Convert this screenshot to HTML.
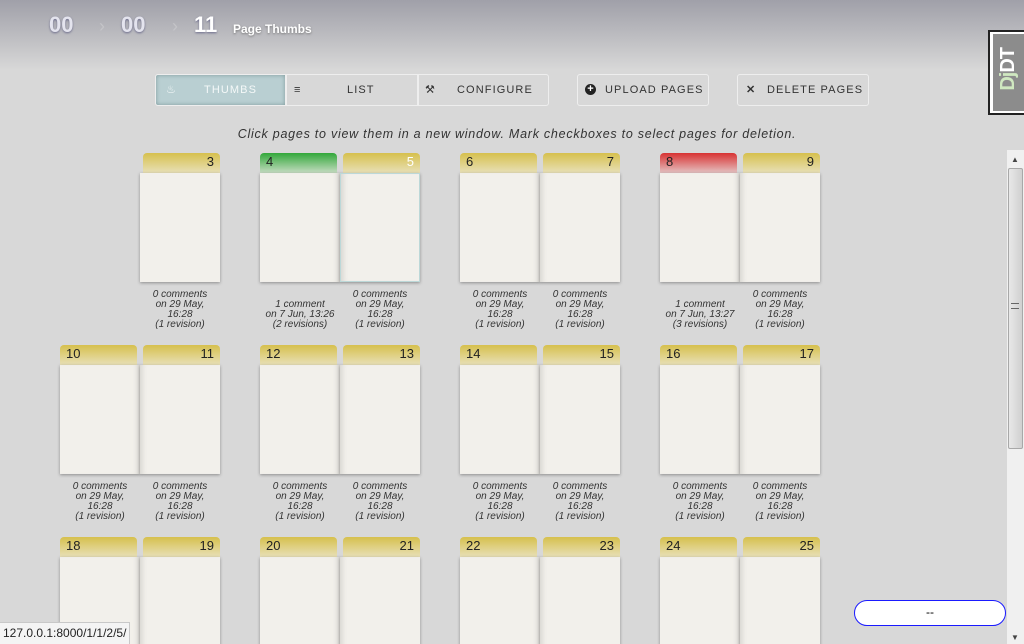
<!DOCTYPE html>
<html><head><meta charset="utf-8"><style>
*{margin:0;padding:0;box-sizing:border-box}
html,body{width:1024px;height:644px;overflow:hidden}
body{background:#d8d8d8;font-family:"Liberation Sans",sans-serif;position:relative}
.hdr{position:absolute;left:0;top:0;width:1024px;height:70px;background:linear-gradient(#a0a0a9,#b6b6bb 40%,#d8d8d8)}
.bc{position:absolute;top:12px;font-weight:bold;font-size:22px;color:#e4e4ee;text-shadow:0 1px 2px #6a6a8a}
.arr{position:absolute;top:16px;width:8px;height:18px;color:#c4c4c8;font-size:18px}
.btn{position:absolute;top:74px;height:32px;border:1px solid #eee;font-size:11px;letter-spacing:1.1px;color:#333;line-height:30px;white-space:nowrap}
.tab{position:absolute;height:20px;border-radius:4px 4px 0 0;background:linear-gradient(#d6c04d,#e8e0b8);font-size:13px;color:#222;line-height:18px;padding:0 6px}
.tab.r{text-align:right}
.tab.g{background:linear-gradient(#32a83a,#c6dcc2)}
.tab.red{background:linear-gradient(#d83232,#e4c2c2)}
.pg{position:absolute;width:80px;height:109px;background:#f2f0eb;box-shadow:0 1px 3px rgba(0,0,0,.35)}
.pg.l{box-shadow:inset -6px 0 6px -4px rgba(0,0,0,.15),0 1px 3px rgba(0,0,0,.35)}
.pg.r{box-shadow:inset 6px 0 6px -4px rgba(0,0,0,.12),0 1px 3px rgba(0,0,0,.35)}
.cm{position:absolute;width:100px;text-align:center;font-style:italic;font-size:10px;line-height:10px;color:#333}
</style></head><body>
<div class="hdr"></div>
<div class="bc" style="left:49px">00</div>
<div class="arr" style="left:99px">›</div>
<div class="bc" style="left:121px">00</div>
<div class="arr" style="left:172px">›</div>
<div class="bc" style="left:194px;color:#fff">11</div>
<div style="position:absolute;left:233px;top:22px;font-size:12px;font-weight:bold;color:#fff;text-shadow:0 1px 2px #777">Page Thumbs</div>

<div class="btn" style="left:155px;width:131px;background:#b9cfd2;color:#f4f8f8;box-shadow:inset 0 0 4px #7f9a9c;border-radius:3px 0 0 3px"><span style="position:absolute;left:10px;font-size:11px">&#9832;</span><span style="position:absolute;left:48px">THUMBS</span></div>
<div class="btn" style="left:286px;width:132px"><span style="position:absolute;left:7px">&#8801;</span><span style="position:absolute;left:60px">LIST</span></div>
<div class="btn" style="left:418px;width:131px;border-radius:0 3px 3px 0"><span style="position:absolute;left:6px">&#9874;</span><span style="position:absolute;left:38px">CONFIGURE</span></div>
<div class="btn" style="left:577px;width:132px;border-radius:3px"><span style="position:absolute;left:7px;top:9px;width:11px;height:11px;border-radius:50%;background:#222;color:#fff;font-size:11px;line-height:11px;text-align:center;letter-spacing:0;font-weight:bold">+</span><span style="position:absolute;left:27px">UPLOAD PAGES</span></div>
<div class="btn" style="left:737px;width:132px;border-radius:3px"><span style="position:absolute;left:8px;font-weight:bold">✕</span><span style="position:absolute;left:29px">DELETE PAGES</span></div>

<div style="position:absolute;left:988px;top:30px;width:36px;height:85px;border:2px solid #222;border-right:none;background:#fff;padding:2px 0 2px 3px"><div style="width:100%;height:100%;background:#8c8c8c;position:relative"><div style="position:absolute;left:3px;top:14px;writing-mode:vertical-rl;transform:rotate(180deg);font-weight:bold;font-size:20px;line-height:24px;color:#fff;letter-spacing:-1px"><span style="color:#cfe8c0">Dj</span>DT</div></div></div>

<div style="position:absolute;left:0;width:1034px;top:127px;text-align:center;font-style:italic;font-size:12.5px;letter-spacing:.75px;color:#333">Click pages to view them in a new window. Mark checkboxes to select pages for deletion.</div>

<!-- row 1 -->
<div class="tab r" style="left:143px;top:153px;width:77px">3</div>
<div class="pg" style="left:140px;top:173px"></div>
<div class="cm" style="left:130px;top:290px">0 comments<br>on 29 May,<br>16:28<br>(1 revision)</div>

<div class="tab g" style="left:260px;top:153px;width:77px">4</div>
<div class="pg l" style="left:260px;top:173px"></div>
<div class="cm" style="left:250px;top:300px">1 comment<br>on 7 Jun, 13:26<br>(2 revisions)</div>
<div class="tab r" style="left:343px;top:153px;width:77px;color:#fff">5</div>
<div class="pg r" style="left:340px;top:173px;border:1px solid #bcd8d8"></div>
<div class="cm" style="left:330px;top:290px">0 comments<br>on 29 May,<br>16:28<br>(1 revision)</div>

<div class="tab" style="left:460px;top:153px;width:77px">6</div>
<div class="pg l" style="left:460px;top:173px"></div>
<div class="cm" style="left:450px;top:290px">0 comments<br>on 29 May,<br>16:28<br>(1 revision)</div>
<div class="tab r" style="left:543px;top:153px;width:77px">7</div>
<div class="pg r" style="left:540px;top:173px"></div>
<div class="cm" style="left:530px;top:290px">0 comments<br>on 29 May,<br>16:28<br>(1 revision)</div>

<div class="tab red" style="left:660px;top:153px;width:77px">8</div>
<div class="pg l" style="left:660px;top:173px"></div>
<div class="cm" style="left:650px;top:300px">1 comment<br>on 7 Jun, 13:27<br>(3 revisions)</div>
<div class="tab r" style="left:743px;top:153px;width:77px">9</div>
<div class="pg r" style="left:740px;top:173px"></div>
<div class="cm" style="left:730px;top:290px">0 comments<br>on 29 May,<br>16:28<br>(1 revision)</div>

<!-- row 2 -->
<div class="tab" style="left:60px;top:345px;width:77px">10</div><div class="pg l" style="left:60px;top:365px"></div>
<div class="cm" style="left:50px;top:482px">0 comments<br>on 29 May,<br>16:28<br>(1 revision)</div>
<div class="tab r" style="left:143px;top:345px;width:77px">11</div><div class="pg r" style="left:140px;top:365px"></div>
<div class="cm" style="left:130px;top:482px">0 comments<br>on 29 May,<br>16:28<br>(1 revision)</div>
<div class="tab" style="left:260px;top:345px;width:77px">12</div><div class="pg l" style="left:260px;top:365px"></div>
<div class="cm" style="left:250px;top:482px">0 comments<br>on 29 May,<br>16:28<br>(1 revision)</div>
<div class="tab r" style="left:343px;top:345px;width:77px">13</div><div class="pg r" style="left:340px;top:365px"></div>
<div class="cm" style="left:330px;top:482px">0 comments<br>on 29 May,<br>16:28<br>(1 revision)</div>
<div class="tab" style="left:460px;top:345px;width:77px">14</div><div class="pg l" style="left:460px;top:365px"></div>
<div class="cm" style="left:450px;top:482px">0 comments<br>on 29 May,<br>16:28<br>(1 revision)</div>
<div class="tab r" style="left:543px;top:345px;width:77px">15</div><div class="pg r" style="left:540px;top:365px"></div>
<div class="cm" style="left:530px;top:482px">0 comments<br>on 29 May,<br>16:28<br>(1 revision)</div>
<div class="tab" style="left:660px;top:345px;width:77px">16</div><div class="pg l" style="left:660px;top:365px"></div>
<div class="cm" style="left:650px;top:482px">0 comments<br>on 29 May,<br>16:28<br>(1 revision)</div>
<div class="tab r" style="left:743px;top:345px;width:77px">17</div><div class="pg r" style="left:740px;top:365px"></div>
<div class="cm" style="left:730px;top:482px">0 comments<br>on 29 May,<br>16:28<br>(1 revision)</div>

<!-- row 3 -->
<div class="tab" style="left:60px;top:537px;width:77px">18</div><div class="pg l" style="left:60px;top:557px"></div>
<div class="tab r" style="left:143px;top:537px;width:77px">19</div><div class="pg r" style="left:140px;top:557px"></div>
<div class="tab" style="left:260px;top:537px;width:77px">20</div><div class="pg l" style="left:260px;top:557px"></div>
<div class="tab r" style="left:343px;top:537px;width:77px">21</div><div class="pg r" style="left:340px;top:557px"></div>
<div class="tab" style="left:460px;top:537px;width:77px">22</div><div class="pg l" style="left:460px;top:557px"></div>
<div class="tab r" style="left:543px;top:537px;width:77px">23</div><div class="pg r" style="left:540px;top:557px"></div>
<div class="tab" style="left:660px;top:537px;width:77px">24</div><div class="pg l" style="left:660px;top:557px"></div>
<div class="tab r" style="left:743px;top:537px;width:77px">25</div><div class="pg r" style="left:740px;top:557px"></div>

<!-- scrollbar -->
<div style="position:absolute;left:1007px;top:150px;width:17px;height:494px;background:#f0f0f0"></div>
<div style="position:absolute;left:1011px;top:155px;font-size:8px;color:#444">▲</div>
<div style="position:absolute;left:1008px;top:168px;width:15px;height:281px;background:linear-gradient(90deg,#e8e8e8,#d0d0d0);border:1px solid #a8a8a8;border-radius:2px"></div>
<div style="position:absolute;left:1011px;top:303px;width:8px;height:6px;border-top:1px solid #666;border-bottom:1px solid #666"></div>
<div style="position:absolute;left:1011px;top:633px;font-size:8px;color:#444">▼</div>

<div style="position:absolute;left:854px;top:600px;width:152px;height:26px;border:1.5px solid #1a1aff;border-radius:13px;background:#fff;text-align:center;line-height:22px;font-size:12px;color:#000">--</div>

<div style="position:absolute;left:0;top:622px;width:130px;height:22px;background:#f4f4f4;border:1px solid #c8c8c8;border-left:none;border-bottom:none;font-size:12px;color:#222;padding:3px 0 0 3px">127.0.0.1:8000/1/1/2/5/</div>
</body></html>
